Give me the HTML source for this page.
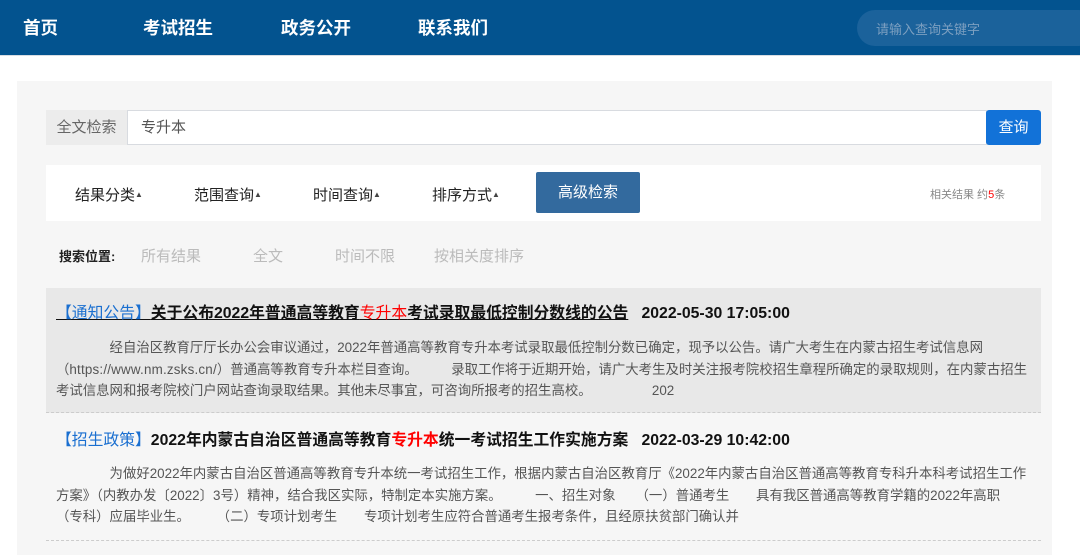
<!DOCTYPE html>
<html><head><meta charset="utf-8"><style>
*{margin:0;padding:0;box-sizing:border-box}
body{width:1080px;height:555px;overflow:hidden;background:#fff;font-family:"Liberation Sans","Noto Sans CJK SC",sans-serif;position:relative}
.a{position:absolute;white-space:nowrap}
.hdr{position:absolute;left:0;top:0;width:1080px;height:56px;background:#03538f;border-bottom:1px solid #d8dde3}
.nav{color:#fff;font-weight:bold;font-size:17.5px;top:15px}
.panel{position:absolute;left:17px;top:81px;width:1035px;height:474px;background:#f6f6f6}
.body{font-size:13.4px;color:#555;line-height:21.5px}
.t{font-size:15.8px;font-weight:bold;color:#111}
.tri{font-size:8px;vertical-align:3px;color:#444}
.f{font-size:15px;color:#222;top:184px}
.g{font-size:15px;color:#bbb;top:245px}
</style></head><body>
<div class="hdr"></div>
<div class="a nav" style="left:23px">首页</div>
<div class="a nav" style="left:143px">考试招生</div>
<div class="a nav" style="left:281px">政务公开</div>
<div class="a nav" style="left:418px">联系我们</div>
<div class="a" style="left:857px;top:10px;width:240px;height:36px;border-radius:18px;background:#1b629b"></div>
<div class="a" style="left:876px;top:19px;font-size:13px;color:#7c9fc0">请输入查询关键字</div>
<div class="panel"></div>
<div class="a" style="left:46px;top:110px;width:81px;height:35px;background:#ececec;color:#666;font-size:15px;line-height:35px;text-align:center">全文检索</div>
<div class="a" style="left:127px;top:110px;width:860px;height:35px;background:#fff;border:1px solid #d8dbe0;color:#555;font-size:15px;line-height:33px;padding-left:13px">专升本</div>
<div class="a" style="left:986px;top:110px;width:55px;height:35px;background:#1272d8;border-radius:3px;color:#fff;font-size:15px;line-height:35px;text-align:center">查询</div>
<div class="a" style="left:46px;top:165px;width:995px;height:56px;background:#fff"></div>
<div class="a f" style="left:75px">结果分类<span class="tri">▲</span></div>
<div class="a f" style="left:194px">范围查询<span class="tri">▲</span></div>
<div class="a f" style="left:313px">时间查询<span class="tri">▲</span></div>
<div class="a f" style="left:432px">排序方式<span class="tri">▲</span></div>
<div class="a" style="left:536px;top:172px;width:104px;height:41px;background:#336a9e;border-radius:2px;color:#fff;font-size:15px;line-height:42px;text-align:center">高级检索</div>
<div class="a" style="left:930px;top:186px;font-size:11px;color:#888">相关结果 约<span style="color:#f00">5</span>条</div>
<div class="a" style="left:59px;top:246px;font-size:13px;font-weight:bold;color:#222">搜索位置:</div>
<div class="a g" style="left:141px">所有结果</div>
<div class="a g" style="left:253px">全文</div>
<div class="a g" style="left:335px">时间不限</div>
<div class="a g" style="left:434px">按相关度排序</div>

<div class="a" style="left:46px;top:288px;width:995px;height:125px;background:#e8e8e8;border-bottom:1px dashed #ccc"></div>
<div class="a t" style="left:56px;top:300px"><span style="text-decoration:underline"><span style="color:#1a6fd0;font-weight:normal">【通知公告】</span>关于公布2022年普通高等教育<span style="color:#f00;font-weight:normal">专升本</span>考试录取最低控制分数线的公告</span>&nbsp;&nbsp;&nbsp;2022-05-30 17:05:00</div>
<div class="a body" style="left:56px;top:337px">　　　　经自治区教育厅厅长办公会审议通过，2022年普通高等教育专升本考试录取最低控制分数已确定，现予以公告。请广大考生在内蒙古招生考试信息网<br>（<span style="letter-spacing:0.2px">https://www.nm.zsks.cn/</span>）普通高等教育专升本栏目查询。　　　录取工作将于近期开始，请广大考生及时关注报考院校招生章程所确定的录取规则，在内蒙古招生<br>考试信息网和报考院校门户网站查询录取结果。其他未尽事宜，可咨询所报考的招生高校。　　　　　202</div>

<div class="a" style="left:46px;top:413px;width:995px;height:128px;border-bottom:1px dashed #ccc"></div>
<div class="a t" style="left:56px;top:427px"><span style="color:#1a6fd0;font-weight:normal">【招生政策】</span>2022年内蒙古自治区普通高等教育<span style="color:#f00">专升本</span>统一考试招生工作实施方案&nbsp;&nbsp;&nbsp;2022-03-29 10:42:00</div>
<div class="a body" style="left:56px;top:463px">　　　　为做好2022年内蒙古自治区普通高等教育专升本统一考试招生工作，根据内蒙古自治区教育厅《2022年内蒙古自治区普通高等教育专科升本科考试招生工作<br>方案》（内教办发〔2022〕3号）精神，结合我区实际，特制定本实施方案。　　　一、招生对象　　（一）普通考生　　具有我区普通高等教育学籍的2022年高职<br>（专科）应届毕业生。　　　（二）专项计划考生　　专项计划考生应符合普通考生报考条件，且经原扶贫部门确认并</div>
</body></html>
